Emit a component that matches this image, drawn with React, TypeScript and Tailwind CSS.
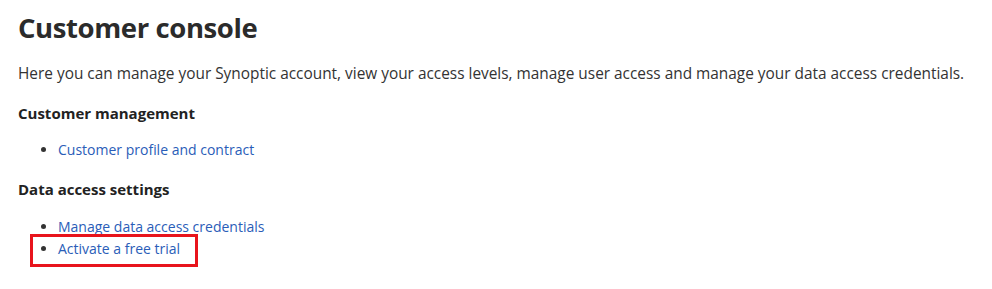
import React from "react";

export default function App() {
  return (
    <div className="bg-white w-[992px] h-[289px] px-[18px] pt-[8px] text-[#333333]" style={{ fontFamily: '"Open Sans", "Liberation Sans", sans-serif' }}>
      <h1 className="text-[27.5px] font-bold leading-[40px] text-[#2b2b2b] tracking-[-0.4px]">Customer console</h1>
      <p className="text-[15.4px] leading-[22px] mt-[15px]">
        Here you can manage your Synoptic account, view your access levels, manage user access and manage your data access credentials.
      </p>
      <h2 className="text-[15px] font-bold leading-[22px] mt-[17px] text-[#222]">Customer management</h2>
      <ul className="list-disc pl-[40px] mt-[15px] text-[14px] leading-[22px]">
        <li><a href="#" className="text-[#2a5db8]">Customer profile and contract</a></li>
      </ul>
      <h2 className="text-[15px] font-bold leading-[22px] mt-[17px] text-[#222]">Data access settings</h2>
      <ul className="list-disc pl-[40px] mt-[16px] text-[14px] leading-[22px]">
        <li><a href="#" className="text-[#2a5db8]">Manage data access credentials</a></li>
        <li className="relative">
          <a href="#" className="text-[#2a5db8]">Activate a free trial</a>
          <span className="absolute left-[-28px] top-[-4px] w-[168px] h-[33px] border-[3px] border-[#e8141c]"></span>
        </li>
      </ul>
    </div>
  );
}
